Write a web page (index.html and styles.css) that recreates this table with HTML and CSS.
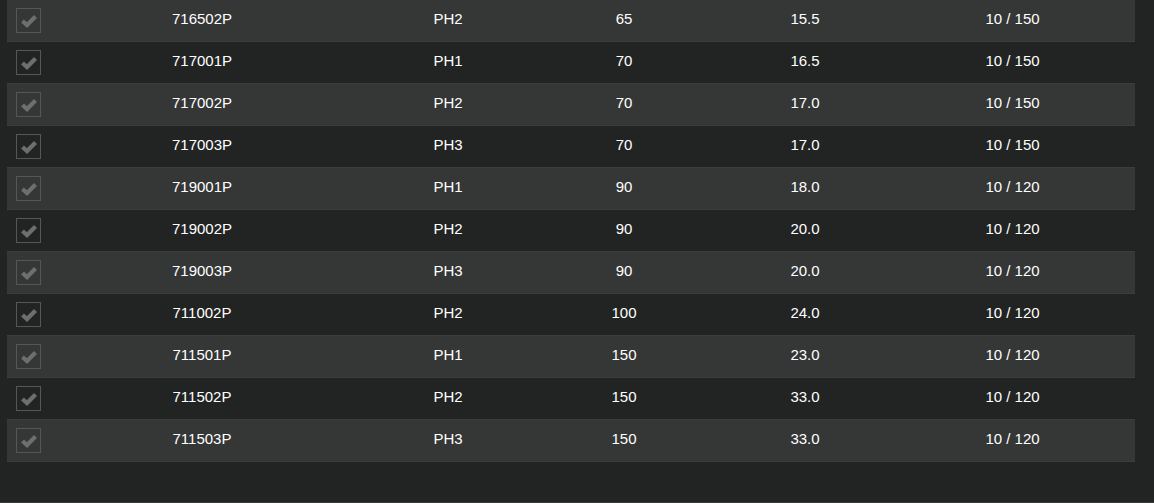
FILE: index.html
```html
<!DOCTYPE html>
<html>
<head>
<meta charset="utf-8">
<link rel="stylesheet" href="styles.css">
</head>
<body>
<div class="page">
  <div class="table">
    <div class="row"><div class="cb"><span class="box"><svg viewBox="0 0 16 14"><path d="M1.5 7 L6 11 L14.5 2.5"/></svg></span></div><div class="c">716502P</div><div class="c">PH2</div><div class="c">65</div><div class="c">15.5</div><div class="c">10 / 150</div></div>
    <div class="row"><div class="cb"><span class="box"><svg viewBox="0 0 16 14"><path d="M1.5 7 L6 11 L14.5 2.5"/></svg></span></div><div class="c">717001P</div><div class="c">PH1</div><div class="c">70</div><div class="c">16.5</div><div class="c">10 / 150</div></div>
    <div class="row"><div class="cb"><span class="box"><svg viewBox="0 0 16 14"><path d="M1.5 7 L6 11 L14.5 2.5"/></svg></span></div><div class="c">717002P</div><div class="c">PH2</div><div class="c">70</div><div class="c">17.0</div><div class="c">10 / 150</div></div>
    <div class="row"><div class="cb"><span class="box"><svg viewBox="0 0 16 14"><path d="M1.5 7 L6 11 L14.5 2.5"/></svg></span></div><div class="c">717003P</div><div class="c">PH3</div><div class="c">70</div><div class="c">17.0</div><div class="c">10 / 150</div></div>
    <div class="row"><div class="cb"><span class="box"><svg viewBox="0 0 16 14"><path d="M1.5 7 L6 11 L14.5 2.5"/></svg></span></div><div class="c">719001P</div><div class="c">PH1</div><div class="c">90</div><div class="c">18.0</div><div class="c">10 / 120</div></div>
    <div class="row"><div class="cb"><span class="box"><svg viewBox="0 0 16 14"><path d="M1.5 7 L6 11 L14.5 2.5"/></svg></span></div><div class="c">719002P</div><div class="c">PH2</div><div class="c">90</div><div class="c">20.0</div><div class="c">10 / 120</div></div>
    <div class="row"><div class="cb"><span class="box"><svg viewBox="0 0 16 14"><path d="M1.5 7 L6 11 L14.5 2.5"/></svg></span></div><div class="c">719003P</div><div class="c">PH3</div><div class="c">90</div><div class="c">20.0</div><div class="c">10 / 120</div></div>
    <div class="row"><div class="cb"><span class="box"><svg viewBox="0 0 16 14"><path d="M1.5 7 L6 11 L14.5 2.5"/></svg></span></div><div class="c">711002P</div><div class="c">PH2</div><div class="c">100</div><div class="c">24.0</div><div class="c">10 / 120</div></div>
    <div class="row"><div class="cb"><span class="box"><svg viewBox="0 0 16 14"><path d="M1.5 7 L6 11 L14.5 2.5"/></svg></span></div><div class="c">711501P</div><div class="c">PH1</div><div class="c">150</div><div class="c">23.0</div><div class="c">10 / 120</div></div>
    <div class="row"><div class="cb"><span class="box"><svg viewBox="0 0 16 14"><path d="M1.5 7 L6 11 L14.5 2.5"/></svg></span></div><div class="c">711502P</div><div class="c">PH2</div><div class="c">150</div><div class="c">33.0</div><div class="c">10 / 120</div></div>
    <div class="row"><div class="cb"><span class="box"><svg viewBox="0 0 16 14"><path d="M1.5 7 L6 11 L14.5 2.5"/></svg></span></div><div class="c">711503P</div><div class="c">PH3</div><div class="c">150</div><div class="c">33.0</div><div class="c">10 / 120</div></div>
  </div>
</div>
</body>
</html>
```
FILE: styles.css
```css
html, body {
  margin: 0;
  padding: 0;
  background: #222423;
}
body {
  font-family: "Liberation Sans", Arial, sans-serif;
  font-size: 15px;
  color: #ffffff;
  height: 503px;
  overflow: hidden;
}
.page {
  height: 502px;
  border-bottom: 1px solid #3a3b3b;
  padding: 0 19px 0 7px;
}
.table {
  display: flex;
  flex-direction: column;
}
.row {
  display: grid;
  grid-template-columns: 43px 304px 188px 164px 198px 217px 1fr;
  height: 41px;
  border-bottom: 1px solid #3c3d3d;
  align-items: center;
  background: #222423;
}
.row:nth-child(odd) {
  background: #353636;
}
.c {
  text-align: center;
  line-height: 37px;
  padding-bottom: 4px;
}
.cb {
  padding-left: 9px;
  display: flex;
  align-items: center;
}
.box {
  width: 23px;
  height: 23px;
  border: 1px solid #555656;
  display: flex;
  align-items: center;
  justify-content: center;
}
.box svg {
  width: 16px;
  height: 14px;
  fill: none;
  stroke: #6e6e6e;
  stroke-width: 4.2;
  stroke-linecap: butt;
  stroke-linejoin: miter;
}
```
